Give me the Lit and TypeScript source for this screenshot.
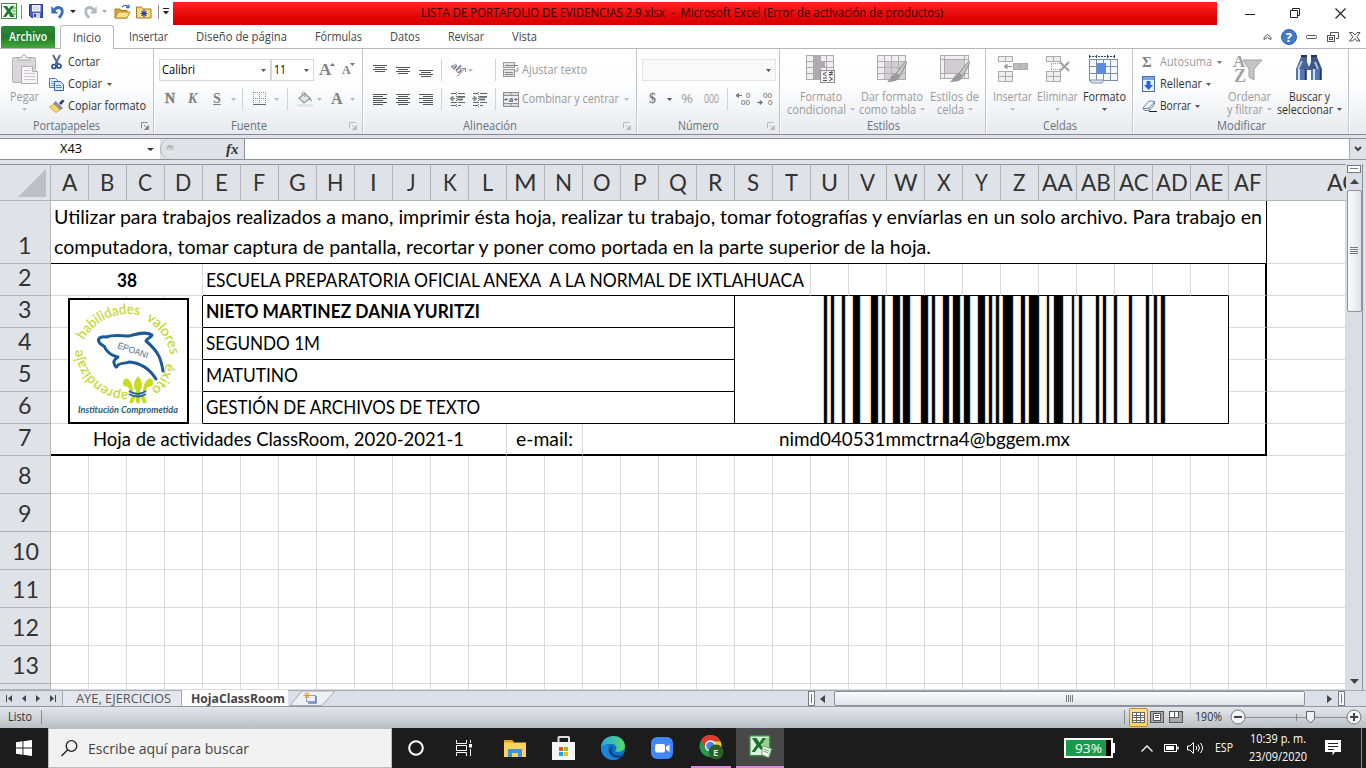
import { LitElement, html, css, svg, nothing } from "lit";
import { customElement, property } from "lit/decorators.js";

/** Text stretched horizontally to occupy a known width. */
@customElement("fit-text")
class FitText extends LitElement {
  @property({ type: Number }) w = 0;
  @property() text = "";
  static styles = css`
    :host { display: inline-block; flex: none; white-space: pre; }
    .t { display: inline-block; transform-origin: 0 50%; }
  `;
  render() {
    return html`<span class="t">${this.text}</span>`;
  }
  updated() {
    const t = this.renderRoot.querySelector(".t") as HTMLElement;
    t.style.transform = "none";
    this.style.width = "auto";
    const n = t.getBoundingClientRect().width;
    this.style.width = this.w + "px";
    if (n > 0 && this.w > 0) t.style.transform = `scaleX(${this.w / n})`;
  }
}

const T = (text: string, w: number, cls = "") => html`<fit-text class=${cls} .w=${w} .text=${text}></fit-text>`;
const B = (w: number, content: unknown = nothing, cls = "") =>
  html`<span class="box ${cls}" style="width:${w}px">${content}</span>`;
const I = (w: number, h: number, content: unknown) =>
  html`<svg width=${w} height=${h} viewBox="0 0 ${w} ${h}">${content}</svg>`;

const arrow = (c = "#555", w = 5) => I(w, 3, svg`<path d="M0 0H${w}L${w / 2} 3Z" fill=${c}/>`);
const lines = (rows: number[][], h: number) =>
  I(14, h, rows.map(([x, y, w]) => svg`<rect x=${x} y=${y} width=${w} height="1" fill="#555"/>`));
const launcher = (c: string) =>
  I(8, 8, svg`<path d="M.5 6.500V.5H6.500" fill="none" stroke=${c}/><path d="M3 3l3 3M7.500 3.500v4H3.500z" stroke=${c} fill=${c}/>`);

/* ---------- quick access icons ---------- */
const excelIcon = I(17, 17, svg`
  <rect x=".5" y=".5" width="15" height="15" fill="#f3faf3" stroke="#3f8f46"/>
  <path d="M11 2h3.500v12H11z" fill="#d3ead4"/><path d="M11 5h4M11 8h4M11 11h4" stroke="#69ab6c"/>
  <path d="M2 3h4l2 3 2-3h3l-3.500 5L13.500 14H9.500L7.500 10.500 5 14H2l4-6z" fill="#1d7a2b"/>`);
const saveIcon = I(15, 15, svg`
  <path d="M.5.500h13v13H2.500l-2-2z" fill="#4a5cc0" stroke="#28349a"/>
  <rect x="3" y="1" width="8.500" height="6.500" fill="#f6f8ff"/><path d="M4 3h6M4 5h6" stroke="#b9c3e6"/>
  <rect x="4" y="9" width="7" height="5" fill="#cfd5e6"/><rect x="5" y="10" width="2" height="3" fill="#333c80"/>`);
const undoIcon = (c: string, flip = false) => I(14, 14, svg`
  <g transform=${flip ? "translate(14 0) scale(-1 1)" : ""}>
    <path d="M3.500 5C5.500 1.500 11.300 1.500 11.300 6.500 11.300 9 9.500 11 8 12.800" fill="none" stroke=${c} stroke-width="2.800"/>
    <path d="M.3 1v7.500h7z" fill=${c}/></g>`);
const openIcon = I(17, 16, svg`
  <path d="M1 14V5h5l1 1.500h6V14z" fill="#e0a73a" stroke="#a87a20"/>
  <path d="M1 14l3.500-6H16l-3 6z" fill="#ffe28a" stroke="#b98a2a"/>
  <path d="M8 3c2-2.500 5-2 6.500 0M15 .5v3h-3" stroke="#3f72b8" stroke-width="1.300" fill="none"/>`);
const starFolder = I(16, 14, svg`
  <path d="M.5 13V2h5l1.500 2h8v9z" fill="#f8d878" stroke="#a87a20"/><rect x="4" y="5" width="8" height="7" fill="#fbe9ae"/>
  <path d="M8 4.500v8M4.500 8.500h7M5.500 6l5 5M10.500 6l-5 5" stroke="#27408f" stroke-width="1.100"/>`);

/* ---------- ribbon icons ---------- */
const pasteIcon = I(28, 32, svg`
  <rect x="1.500" y="3.500" width="23" height="25" rx="1.500" fill="#d9d7da" stroke="#b5b3b6"/>
  <path d="M7 6V3.500h3.500c0-3.500 5-3.500 5 0H19V6z" fill="#eee" stroke="#a9a8aa"/>
  <path d="M10.500 12.500h11l5 5v12h-16z" fill="#f7f5f8" stroke="#b2afb4"/><path d="M21.500 12.500v5h5" fill="#ddd" stroke="#b2afb4"/>
  <path d="M13 16.500h6M13 19.500h11M13 22.500h11M13 25.500h11" stroke="#c9c6cb"/>`);
const cutIcon = I(12, 15, svg`
  <path d="M2 0l5 9M9 0L4.500 9" stroke="#4d6793" stroke-width="1.800"/>
  <circle cx="3" cy="11.500" r="2" fill="none" stroke="#24509e" stroke-width="1.700"/><circle cx="8" cy="11" r="2" fill="none" stroke="#24509e" stroke-width="1.700"/>`);
const copyIcon = I(15, 13, svg`
  <path d="M.5.500h6l2 2v7h-8z" fill="#eaf2ff" stroke="#4f76b8"/><path d="M2 3.500h4M2 5.500h3M2 7.500h3" stroke="#7d9fd4"/>
  <path d="M5.500 3.500h6l3 3v6h-9z" fill="#dfebff" stroke="#315fae"/><path d="M7 7.500h5M7 9.500h6" stroke="#5a83c6"/>`);
const brushIcon = I(16, 14, svg`
  <path d="M10 4L13.500 .5l2 1.500-3.500 4z" fill="#333e60"/><path d="M6.500 2.500l7 6.500-3 2L4.500 5z" fill="#8b94aa" stroke="#5d667e" stroke-width=".7"/>
  <path d="M5 5l6 5.800L7 13.700 .3 8z" fill="#f7d866" stroke="#c79b35" stroke-width=".8"/>`);
const bordersIcon = I(14, 14, svg`
  <path d="M.5 0v13M6.500 0v13M12.500 0v13M0 .5h13M0 6.500h13" stroke="#888" stroke-dasharray="1 1"/><path d="M0 12.500h13" stroke="#666"/>`);
const bucketIcon = I(16, 15, svg`
  <path d="M2 6l6-4.500 5 5L7 11z" fill="#e4e4e4" stroke="#999" stroke-width="1.200"/><path d="M5 4V1q1.500-1.500 3 0V5" fill="none" stroke="#999"/>
  <path d="M11.500 4.500q3.500 1 3 5.500L12 7z" fill="#999"/><rect y="12" width="16" height="3" fill="#eae4ea"/>`);
const orientIcon = I(15, 14, svg`
  <text x="-1" y="7" font-size="11" font-weight="700" fill="#777" font-family="Liberation Serif" transform="rotate(42 4 6)">ab</text>
  <path d="M6 13.500L14 5.500M11 5.500h3.500v3.500" stroke="#888" fill="none"/>`);
const indentIcon = (right: boolean) => I(16, 15, svg`
  <path d="M1 1.500h5M8 1.500h7M8 4.500h7M8 7.500h5M1 10.500h5M8 10.500h7M1 13.500h5M8 13.500h3" stroke="#666"/>
  <path d="M7 5h8M7 7.500h6" stroke="#666" stroke-width="2" opacity=".7"/><path d="M6.500 0v15" stroke="#777" stroke-dasharray="1 1"/>
  <path d=${right ? "M0 6.500h3M2 4l3 2.500L2 9z" : "M1 6.500h4M3 4L0 6.500 3 9z"} stroke="#888" fill="#888"/>`);
const wrapIcon = I(16, 16, svg`
  <rect x=".5" y=".5" width="11" height="5" fill="#e5e2e6" stroke="#999"/><path d="M2 3.500h13" stroke="#888"/>
  <rect x=".5" y="7.500" width="11" height="7" fill="#e5e2e6" stroke="#999"/><path d="M2 10.500h8M2 12.500h8M15 5v4h-3" stroke="#888" fill="none"/>`);
const mergeIcon = I(16, 15, svg`
  <rect x=".5" y=".5" width="15" height="14" fill="#ddd" stroke="#8e8e8e"/><path d="M0 3.500h16M0 11.500h16M8 0v3M8 12v3" stroke="#8e8e8e"/>
  <rect x="1" y="4" width="14" height="7" fill="#f1eff2"/><path d="M1 7.500h4M11 7.500h4M3 6v3M13 6v3" stroke="#777"/>
  <text x="5.700" y="10.300" font-size="9" font-weight="700" fill="#666" font-family="Liberation Serif">a</text>`);
const grid = (x: number, y: number, w: number, h: number, c: number, r: number, fill = "#f1eef2", st = "#aeabaf") => svg`
  <rect x=${x + 0.5} y=${y + 0.5} width=${w} height=${h} fill=${fill} stroke=${st}/>
  ${Array.from({ length: c - 1 }, (_, i) => { const p = Math.round(x + ((i + 1) * w) / c) + 0.5; return svg`<path d="M${p} ${y}v${h}" stroke=${st}/>`; })}
  ${Array.from({ length: r - 1 }, (_, i) => { const p = Math.round(y + ((i + 1) * h) / r) + 0.5; return svg`<path d="M${x} ${p}h${w}" stroke=${st}/>`; })}`;
const brush = svg`<path d="M29 8c1-1 2 0 1.500 1.500L24 22l-4-2.500z" fill="#c8c6c9" stroke="#908e91"/><path d="M20 19l4 3.500C22 27.500 16 28 11 28c3-2 4-7.500 9-9z" fill="#9a989b"/>`;
const condIcon = I(32, 30, svg`${grid(1, 1, 27, 24, 4, 4)}<path d="M8 2h7v5h5v6h-5v12H8z" fill="#adabae"/>
  <rect x="15.500" y="16.500" width="14" height="12" fill="#f3f3f3" stroke="#8e8e8e"/><path d="M21.500 18l-3.500 2 3.500 2M18 24h4M18 26.500h4M24 18.500h4M24 20.500h4M27 17l-2 5M24 23l3.500 2-3.500 2" stroke="#555" fill="none"/>`);
const tableIcon = I(32, 30, svg`${grid(1, 1, 28, 24, 4, 4)}<path d="M8 7h21v18H8z" fill="#bbb9bc" opacity=".6"/>${brush}`);
const styleIcon = I(32, 30, svg`${grid(1, 1, 28, 23, 1, 1)}<rect x="6" y="6" width="19" height="13" fill="#cfcdd0"/><path d="M5.500 1v23M25.500 1v23M1 5.500h28M1 19.500h28" stroke="#aeabaf"/>${brush}`);
const insertIcon = I(32, 30, svg`${grid(1, 2, 14, 5, 2, 1)}${grid(1, 17, 14, 10, 2, 2)}${grid(16, 9, 14, 6, 2, 1, "#bbb")}
  <path d="M8 12.500h7M10 10l-3 2.500 3 2.500z" stroke="#999" fill="#999"/>`);
const deleteIcon = I(32, 30, svg`${grid(4, 2, 14, 5, 2, 1)}${grid(4, 17, 14, 10, 2, 2)}
  <path d="M9 9.500h12M9 15.500h12M9.500 10v6" stroke="#999" stroke-dasharray="1 1" fill="none"/><path d="M18 8l9 9M27 8l-9 9" stroke="#a5a3a6" stroke-width="2.200"/>`);
const formatIcon = I(32, 30, svg`
  <path d="M1 2.500h25" stroke="#24436e" stroke-dasharray="2 1"/><path d="M1.500 1v3M8.500 1v3M19.500 1v3M26.500 1v3" stroke="#24436e"/>
  ${grid(1, 5, 28, 21, 4, 3, "#f5f8fd", "#7f90ab")}<rect x="9" y="9" width="9" height="11" fill="#5c8be6"/>
  <path d="M2 26q0 3 3 3h9l2-3z" fill="#dfe5f0" stroke="#7f90ab"/>`);
const fillIcon = I(13, 16, svg`<rect x=".5" y=".5" width="12" height="15" fill="#e9f1fe" stroke="#4a6ea8"/><rect x="1" y="1" width="11" height="3" fill="#7ea2dd"/>
  <path d="M4.500 5h4v4H11l-4.500 5L2 9h2.500z" fill="#2664d8"/>`);
const eraseIcon = I(15, 12, svg`<path d="M1 8L6.500 1.500Q9 .5 12.500 1.500V4L7.500 10.500H3Q1 10 1 8z" fill="#f3f6fb" stroke="#6d83ae"/><path d="M1 8q3 1.500 6 0l5.500-6M7 8v2.500" fill="none" stroke="#6d83ae"/><path d="M7 11.500h8" stroke="#222"/>`);
const sortIcon = I(32, 30, svg`
  <text x="0" y="13" font-size="17" font-weight="700" fill="#a3a1a4" font-family="Liberation Serif">A</text>
  <text x="1" y="28" font-size="18" font-weight="700" fill="#a3a1a4" font-family="Liberation Serif">Z</text>
  <path d="M10 6h19l-8 9v11l-5-3v-8z" fill="#c6c4c7" stroke="#a3a1a4"/>`);
const findIcon = I(28, 27, svg`
  <path d="M6 3h6v5l2 5v3h-2v10H1v-11z" fill="#4a6595"/><path d="M16 3h6l5 12v11H16v-10h-2v-3l2-5z" fill="#3c5786"/>
  <path d="M3 15l4-8M20 8l3 7" stroke="#aebfdd" stroke-width="2"/><rect x="1" y="15" width="11" height="11" rx="1" fill="#5577b0"/><rect x="16" y="15" width="11" height="11" rx="1" fill="#5577b0"/>
  <path d="M4 15v11M19 15v11" stroke="#d4deef" stroke-width="2"/><path d="M10.500 15v11M25.500 15v11" stroke="#203a69" stroke-width="1.500"/><path d="M6 2h6M16 2h6" stroke="#23365a" stroke-width="2"/>`);

/* ---------- barcode: [start, end] of each bar in thirds of a pixel ---------- */
const bars = [[72, 81], [94, 103], [126, 135], [158, 179], [212, 233], [246, 254], [278, 299], [310, 329], [363, 383], [395, 404], [428, 448], [459, 480], [491, 511], [534, 556], [566, 575], [588, 597], [610, 640], [664, 674], [686, 716], [740, 748], [761, 790], [815, 823], [836, 845], [889, 898], [910, 919], [942, 952], [986, 995], [1039, 1048], [1061, 1070], [1083, 1094]];
const barcode = I(493, 127, bars.map(([a, b]) => {
  const x = Math.round(a / 3) + 65, e = Math.round(b / 3) + 65;
  return svg`<rect x=${x - 1} width="1" height="127" fill="#ffc68a"/><rect x=${x} width=${e - x} height="127"/><rect x=${x} width="1" height="127" fill="#2a0c00"/><rect x=${e - 1} width="1" height="127" fill="#00386e" opacity=".6"/><rect x=${e} width="1" height="127" fill="#9fd2fb"/>`;
}));

const logo = html`<svg class="logo" width="121" height="126" viewBox="0 0 121 126">
  <rect x="1" y="1" width="119" height="124" fill="#fff" stroke="#000" stroke-width="2"/>
  <defs>
    <path id="p1" d="M16 42A50 50 0 0 1 74 18"/><path id="p2" d="M78 22A50 50 0 0 1 103 60"/>
    <path id="p3" d="M98 65A48 48 0 0 1 76 97"/><path id="p4" d="M60 94A46 46 0 0 1 14 46"/>
  </defs>
  <g fill="#c5d62b" font-family="Lato" font-size="14" stroke="#c5d62b" stroke-width=".2">
    <text textLength="65" lengthAdjust="spacingAndGlyphs"><textPath href="#p1">habilidades</textPath></text>
    <text textLength="44" lengthAdjust="spacingAndGlyphs"><textPath href="#p2">valores</textPath></text>
    <text textLength="31" lengthAdjust="spacingAndGlyphs"><textPath href="#p3">éxito</textPath></text>
    <text textLength="69" lengthAdjust="spacingAndGlyphs"><textPath href="#p4">aprendizaje</textPath></text>
  </g>
  <path d="M95 73C93 61 91 54 78 43 79 40 83 40 84 37 78 33 68 36 61 38 54 38 46 36 38 39 34 38 29 40 31 44 33 48 37 47 37 50 40 55 44 58 50 59 48 61 45 62 46 65 47 69 49 70 49 68 52 64 58 66 61 64 74 65 83 73 88 81" fill="none" stroke="#1b5a94" stroke-width="3" stroke-linejoin="round" stroke-linecap="round"/>
  <text x="49" y="50" font-family="Liberation Sans" font-size="9" fill="#4a6f92" textLength="32" lengthAdjust="spacingAndGlyphs" transform="rotate(19 49 50)">EPOANI</text>
  <g fill="#c8dc1e"><path d="M70 78q-7 8-2 15v11q2 3 4 0V93q5-7-2-15z"/><path d="M65 94Q65 83 58 80q-5 4-2 8 6 0 6 6zM75 94q0-11 7-14 5 4 2 8-6 0-6 6z"/><path d="M64 97l-3 8h4l3-7zM76 97l3 8h-4l-3-7z"/></g>
  <path d="M61 93q9 6 17 0M61 96q9 5 17 0" stroke="#24639b" stroke-width="1.800" fill="none"/>
  <text x="10" y="115" font-family="Lato" font-style="italic" font-weight="700" font-size="8.500" fill="#2b5a75" textLength="100" lengthAdjust="spacingAndGlyphs">Institución Comprometida</text>
</svg>`;

const cols = [..."ABCDEFGHIJKLMNOPQRSTUVWXYZ", "AA", "AB", "AC", "AD", "AE", "AF"];
/** Advance widths of the capital letters, in thousandths of an em. */
const adv: Record<string, number> = { A: 579, B: 544, C: 533, D: 615, E: 488, F: 459, G: 631, H: 623, I: 252, J: 319, K: 520, L: 420, M: 855, N: 646, O: 662, P: 517, Q: 673, R: 543, S: 459, T: 487, U: 642, V: 567, W: 890, X: 519, Y: 487, Z: 468 };
const head = (s: string) => T(s, [...s].reduce((n, ch) => n + adv[ch] * 0.0265, 0));

@customElement("app-root")
class AppRoot extends LitElement {
  static styles = css`
    :host { display: block; width: 1366px; height: 768px; overflow: hidden; font: 12px/16px "Open Sans", "Noto Sans", sans-serif; color: #333; background: #fff; }
    * { box-sizing: border-box; }
    svg { display: block; flex: none; overflow: visible; }
    .app { display: flex; flex-direction: column; height: 768px; }
    .row { display: flex; align-items: center; }
    .box { display: flex; align-items: center; flex: none; height: 100%; }
    .c { justify-content: center; }
    .vline { width: 1px; height: 14px; background: #8a8a8a; }
    .fade { width: 1px; height: 22px; background: #d0d2d6; }

    .title { height: 25px; flex: none; padding-bottom: 2px; }
    .red { height: 23px; margin-top: 3px; width: 1044px; flex: none; background: linear-gradient(#fb2520, #e00404 70%, #d80000); display: flex; align-items: center; padding-left: 248px; color: #300; margin-right: 28px; }
    .tabs { height: 24px; flex: none; align-items: stretch; border-bottom: 1px solid #b3b7bd; }
    .tabs > .box { height: 24px; color: #444; }
    .file { background: linear-gradient(#2c8a33, #1f7a2a 50%, #46a83a); border-radius: 2px 2px 0 0; font-weight: 600; margin: 1px 5px 0 1px; padding-left: 8px; }
    .tabs > .file { color: #fff; height: 22px; }
    .tabs > .sel { background: #fff; border: 1px solid #b3b7bd; border-bottom: 0; border-radius: 3px 3px 0 0; height: 24px; padding-left: 12px; }

    .ribbon { height: 86px; flex: none; display: flex; background: linear-gradient(#fff, #fdfdfe 45%, #e7eaee); border-bottom: 1px solid #85898f; }
    .grp { flex: none; display: flex; flex-direction: column; border-right: 1px solid #c3c7cd; box-shadow: 1px 0 0 #fff; }
    .body { height: 69px; display: flex; }
    .label { height: 16px; color: #66707e; }
    .stack { display: flex; flex-direction: column; }
    .stack.three { padding-top: 2px; }
    .stack.two { padding-top: 10px; gap: 7px; }
    .r { display: flex; align-items: center; height: 22px; flex: none; }
    .dim { color: #9a9a9a; }
    .combo { height: 22px; border: 1px solid #d5d7dc; background: #fff; color: #000; display: flex; align-items: center; flex: none; }
    .combo.off { background: #f9f9fa; border-color: #e2e3e8; }
    .big { display: flex; flex-direction: column; align-items: center; flex: none; line-height: 13px; color: #333; }
    .big.dim { color: #9a9a9a; }
    .ico { height: 41px; padding-top: 5px; }
    .ln { display: flex; align-items: center; gap: 4px; height: 13px; }
    .serif { font-family: "Liberation Serif", serif; font-weight: 700; color: #808080; line-height: 18px; }

    .fbar { height: 29px; flex: none; background: #e0e3ea; padding: 3px 0 4px; }
    .fin { height: 22px; border: 1px solid #8d9299; border-left: 0; border-right: 0; background: #dfe2e7; display: flex; align-items: center; }
    .name { width: 160px; height: 20px; background: #fff; color: #000; display: flex; align-items: center; padding-left: 60px; }
    .pill { width: 84px; height: 20px; background: #dfe2e7; border: 1px solid #a9adb3; border-width: 0 0 0 1px; border-radius: 10px 0 0 10px; display: flex; align-items: center; padding-left: 5px; flex: none; }
    .dot { width: 8px; height: 8px; border-radius: 50%; background: linear-gradient(#aaa, #f4f4f4); margin-right: 52px; }
    .finput { width: 1105px; height: 20px; background: #fff; border-left: 1px solid #8d9299; flex: none; }
    .fx { font: italic 700 15px/16px "Liberation Serif", serif; color: #333; }
    .expand { flex: 1; height: 20px; display: flex; align-items: center; justify-content: center; border-left: 1px solid #a9adb3; }

    .work { height: 526px; flex: none; display: flex; background: #dce0e8; }
    .sheet { width: 1346px; height: 526px; overflow: hidden; display: grid; grid-template-columns: 51px repeat(32, 38px) 79px; grid-template-rows: 37px 63px repeat(6, 32px) repeat(6, 38px) 6px; background: #fff; flex: none; font-family: Lato, sans-serif; }
    .h { background: #dfe2e7; border-right: 1px solid #b1b5ba; border-bottom: 1px solid #b1b5ba; border-top: 1px solid #8f949b; display: flex; align-items: center; justify-content: center; font-size: 24px; line-height: 34px; color: #333; white-space: nowrap; padding-bottom: 1px; }
    .ag { justify-content: flex-start; padding-left: 60px; border-right: 0; }
    .rh { border-top: 0; align-items: flex-end; line-height: 30px; padding-bottom: 3px; }
    .tall { padding-bottom: 3px; }
    .corner { align-items: flex-end; justify-content: flex-end; padding: 0 4px 3px 0; }
    .cell { border-right: 1px solid #d9dade; border-bottom: 1px solid #d9dade; }
    .m { background: #fff; color: #000; font-size: 18.500px; line-height: 30px; display: flex; align-items: center; padding: 0 0 1px 3px; border-right: 1px solid #d9dade; border-bottom: 1px solid #d9dade; white-space: nowrap; }
    .m1 { flex-direction: column; align-items: flex-start; justify-content: flex-start; padding-top: 2px; line-height: 29px; gap: 1px; border-color: #000; }
    .b { font-weight: 700; }
    .blk { border-color: #000; }
    .low { padding-bottom: 0; }
    .edge { border-right: 2px solid #000; }
    .nr { border-right-color: #000; }
    .nb { border-bottom-color: #000; }
    .thick { border-bottom: 2px solid #000; }
    .bar { padding: 0; }
    .mid { justify-content: center; padding-left: 0; padding-right: 0; }
    .logo { grid-column: 2 / 6; grid-row: 4 / 8; margin: 2px 0 0 17px; z-index: 2; }

    .vs { width: 16px; display: flex; flex-direction: column; align-items: center; height: 526px; background: #d9dde4; flex: none; }
    .split { width: 14px; height: 8px; border: 1px solid #777c84; background: #fff; padding: 2px 2px; flex: none; margin-top: 1px; }
    .split i { display: block; height: 1px; background: #777; }
    .vthumb { width: 15px; height: 122px; border: 1px solid #8c929c; border-radius: 2px; background: linear-gradient(90deg, #fafbfc, #dfe3e9); display: flex; align-items: center; justify-content: center; flex: none; }
    .ua { height: 17px; display: flex; align-items: center; }
    .da { margin-top: auto; height: 16px; display: flex; align-items: center; padding-bottom: 2px; }
    .rim { width: 1px; height: 543px; background: #8c929c; flex: none; }

    .sheets { height: 17px; flex: none; background: #dbdfe7; border-top: 1px solid #a5aab3; border-bottom: 1px solid #9297a0; }
    .st1 { height: 15px; border-left: 1px solid #a5aab3; border-right: 1px solid #a5aab3; background: #e4e7ed; color: #555; padding-left: 13px; }
    .st2 { height: 16px; margin-top: -1px; background: #fff; color: #444; font-weight: 700; padding: 2px 0 0 9px; }
    .spl { width: 7px; height: 15px; border: 1px solid #777c84; background: #fff; padding: 2px; flex: none; }
    .spl i { display: block; width: 1px; height: 9px; background: #777; }
    .hthumb { width: 471px; height: 15px; border: 1px solid #8c929c; border-radius: 2px; background: linear-gradient(#fafbfc, #dfe3e9); display: flex; align-items: center; justify-content: center; flex: none; }

    .status { height: 21px; flex: none; background: linear-gradient(#e2e5e9, #d0d4d9 50%, #b9bec3); color: #333; padding-bottom: 1px; }
    .view { width: 19px; height: 19px; border: 1px solid #c28a2b; border-radius: 2px; background: linear-gradient(#fbe199, #fdd45e); display: flex; align-items: center; justify-content: center; flex: none; margin-right: 2px; }

    .task { height: 40px; flex: none; background: #1c1c1c; color: #fff; }
    .search { width: 344px; height: 40px; background: #f2f2f2; border: 1px solid #bdbdbd; display: flex; align-items: center; color: #444; padding-left: 12px; flex: none; font-size: 15px; }
    .run { border-bottom: 2px solid #e283dc; padding-bottom: 1px; }
    .act { background: #484848; }
    .batt { width: 49px; height: 20px; border: 2px solid #fff; background: linear-gradient(90deg, #169b4a 40px, #000 40px); display: flex; align-items: center; padding-left: 9px; font-size: 13.500px; flex: none; }
    .nub { width: 2px; height: 10px; background: #fff; flex: none; }
    .clock { display: flex; flex-direction: column; line-height: 18px; width: 76px; align-items: flex-start; flex: none; }
    .clock .p { margin-left: 1px; }
  `;

  private label(pad: number, text: string, tw: number, launch = 0, dark = false) {
    return html`<div class="row label">${B(pad)}${T(text, tw)}${launch ? html`${B(launch - pad - tw)}${launcher(dark ? "#888" : "#bbb")}` : nothing}</div>`;
  }
  private big(w: number, icon: unknown, l1: [string, number], l2: [string, number] | null, dim = true) {
    const a = arrow(dim ? "#bbb" : "#555");
    return html`<div class="big ${dim ? "dim" : ""}" style="width:${w}px"><div class="ico">${icon}</div>
      <div class="ln">${T(l1[0], l1[1])}</div><div class="ln">${l2 ? T(l2[0], l2[1]) : nothing}${a}</div></div>`;
  }

  private sheet() {
    const out: unknown[] = [];
    const at = (r: number, c: number, span: number, cls: string, content: unknown = nothing) =>
      out.push(html`<div class=${cls} style="grid-area:${r}/${c}/span 1/span ${span}">${content}</div>`);
    at(1, 1, 1, "h corner", I(28, 28, svg`<path d="M28 0V28H0Z" fill="#bcc0c5"/>`));
    cols.forEach((c, i) => at(1, i + 2, 1, "h", head(c)));
    at(1, 34, 1, "h ag", head("AG"));
    for (let r = 1; r <= 14; r++) at(r + 1, 1, 1, "h rh", r < 14 ? T(String(r), r > 9 ? 27 : 13.5) : nothing);

    at(2, 2, 32, "m m1", html`${T("Utilizar para trabajos realizados a mano, imprimir ésta hoja, realizar tu trabajo, tomar fotografías y envíarlas en un solo archivo. Para trabajo en", 1208)}${T("computadora, tomar captura de pantalla, recortar y poner como portada en la parte superior de la hoja.", 877)}`);
    at(3, 2, 4, "m mid b low", T("38", 20));
    at(3, 6, 16, "m low nb", T("ESCUELA PREPARATORIA OFICIAL ANEXA  A LA NORMAL DE IXTLAHUACA", 598));
    for (let c = 22; c <= 33; c++) at(3, c, 1, "cell" + (c === 33 ? " edge" : " nb"));
    const fields: [string, number, string][] = [
      ["NIETO MARTINEZ DANIA YURITZI", 274, " b"], ["SEGUNDO 1M", 114, ""], ["MATUTINO", 92, ""], ["GESTIÓN DE ARCHIVOS DE TEXTO", 274, ""],
    ];
    fields.forEach(([t, w, b], i) => {
      for (let c = 2; c <= 5; c++) at(4 + i, c, 1, "cell" + (c === 5 ? " nr" : ""));
      at(4 + i, 6, 14, "m blk" + b, T(t, w));
      at(4 + i, 33, 1, "cell edge");
    });
    out.push(html`<div class="m blk bar" style="grid-area:4/20/span 4/span 13">${barcode}</div>`);
    at(8, 2, 12, "m mid thick", T("Hoja de actividades ClassRoom, 2020-2021-1", 371));
    at(8, 14, 2, "m mid thick", T("e-mail:", 57));
    at(8, 16, 18, "m mid thick edge", T("nimd040531mmctrna4@bggem.mx", 291));
    for (let r = 9; r <= 15; r++) for (let c = 2; c <= 33; c++) at(r, c, 1, "cell");
    for (let r = 2; r <= 15; r++) at(r, 34, 1, "cell");
    out.push(logo);
    return out;
  }

  render() {
    return html`<div class="app">
      <div class="row title">
        ${B(1)}${B(20, excelIcon)}${B(8, html`<i class="vline"></i>`)}${B(22, saveIcon)}${B(19, undoIcon("#3b6cb8"))}${B(13, arrow("#222", 6))}
        ${B(19, undoIcon("#b5b8bd", true))}${B(12, arrow("#aaa"))}${B(22, openIcon)}${B(22, starFolder)}${B(5, html`<i class="vline"></i>`)}
        ${B(10, I(6, 7, svg`<path d="M0 .5h6" stroke="#222"/><path d="M0 3h6L3 6.500z" fill="#222"/>`))}
        <div class="red">${T("LISTA DE PORTAFOLIO DE EVIDENCIAS 2.9.xlsx  -  Microsoft Excel (Error de activación de productos)", 522)}</div>
        ${B(45, I(10, 12, svg`<path d="M0 8.500h10" stroke="#222"/>`))}
        ${B(45, I(10, 12, svg`<path d="M.5 4.500h7v7h-7zM2.500 4.500v-2h7v7h-2" fill="none" stroke="#222"/>`))}
        ${B(12, I(11, 12, svg`<path d="M.5 2.500l10 10M10.500 2.500l-10 10" stroke="#222" stroke-width="1.200"/>`))}
      </div>
      <div class="row tabs">
        ${B(54, T("Archivo", 38), "file")}${B(54, T("Inicio", 28), "sel")}${B(15)}
        ${B(67, T("Insertar", 39))}${B(119, T("Diseño de página", 91))}${B(75, T("Fórmulas", 47))}${B(58, T("Datos", 30))}${B(64, T("Revisar", 36))}${B(751, T("Vista", 25))}
        ${B(18, I(9, 8, svg`<path d="M1 4.500L4.500 1.500 8 4.500v2L4.500 4.500 1 6.500z" fill="none" stroke="#555"/>`))}
        ${B(25, I(16, 16, svg`<circle cx="8" cy="8" r="7.500" fill="#3f7bd0" stroke="#2c5da8"/><text x="4.700" y="12.500" font-size="13" font-weight="700" fill="#fff">?</text>`))}
        ${B(21, I(11, 6, svg`<rect x=".5" y="1.500" width="10" height="3" rx="1" fill="#fff" stroke="#555"/>`))}
        ${B(22, I(13, 11, svg`<path d="M3.500 3V.5h8v6H9" fill="none" stroke="#555"/><rect x=".5" y="3.500" width="7" height="6" fill="#fff" stroke="#555"/><rect x="2.500" y="5.500" width="3" height="2" fill="none" stroke="#555"/>`))}
        ${B(12, I(12, 10, svg`<path d="M.5.500h3L6 3l2-2.500h3L8 4.800l3 4.200H8L6 6.500 3.500 9h-3L4 4.800z" fill="#fff" stroke="#555"/>`))}
      </div>
      <div class="ribbon">
        <div class="grp" style="width:154px"><div class="body">
          ${this.big(49, pasteIcon, ["Pegar", 29], null)}
          <div class="stack three">
            <div class="r">${B(2)}${B(17, cutIcon)}${T("Cortar", 32)}</div>
            <div class="r">${B(19, copyIcon)}${B(39, T("Copiar", 34))}${arrow()}</div>
            <div class="r">${B(19, brushIcon)}${T("Copiar formato", 78)}</div>
          </div></div>${this.label(33, "Portapapeles", 67, 141, true)}</div>
        <div class="grp" style="width:209px"><div class="body"><div class="stack two">
          <div class="r">${B(5)}<div class="combo" style="width:112px">${B(2)}${B(99, T("Calibri", 33))}${arrow()}</div><div class="combo" style="width:43px">${B(2)}${B(30, T("11", 12))}${arrow()}</div>
            ${B(5)}${B(23, html`<span class="serif" style="font-size:17px">A</span>${I(4, 14, svg`<path d="M-1 3h5L1.500 0z" fill="#777"/>`)}`)}${B(18, html`<span class="serif" style="font-size:12px">A</span>${I(4, 14, svg`<path d="M-1 0h5L1.500 3z" fill="#777"/>`)}`)}</div>
          <div class="r serif" style="font-size:14px">${B(11)}${B(23, html`<span style="-webkit-text-stroke:.4px #808080">N</span>`)}${B(25, html`<i>K</i>`)}${B(18, html`<u>S</u>`)}${B(11, arrow("#bbb"))}${B(11, html`<i class="fade"></i>`)}${B(21, bordersIcon)}${B(13, arrow("#bbb"))}${B(10, html`<i class="fade"></i>`)}
            ${B(20, bucketIcon)}${B(14, arrow("#bbb"))}${B(19, html`<span style="font-size:16px">A</span>`)}${arrow("#bbb")}</div>
        </div></div>${this.label(77, "Fuente", 36, 195)}</div>
        <div class="grp" style="width:274px"><div class="body"><div class="stack two">
          <div class="r">${B(10)}${B(23, lines([[0, 0, 14], [2, 2, 10], [0, 4, 14], [2, 6, 10]], 10))}${B(23, lines([[0, 1, 14], [2, 3, 10], [0, 5, 14], [2, 7, 10]], 8))}${B(22, lines([[0, 4, 14], [2, 6, 10], [0, 8, 14], [2, 10, 10]], 8))}${B(10, html`<i class="fade"></i>`)}${B(17, orientIcon)}${B(27, arrow("#bbb"))}
            ${B(8, html`<i class="fade"></i>`)}${B(19, wrapIcon)}${T("Ajustar texto", 65, "dim")}</div>
          <div class="r">${B(10)}${[0, 1, 2].map((k) => B(k === 2 ? 22 : 23, lines([14, 10, 14, 10, 14, 10].map((w, i) => [k === 0 ? 0 : k === 1 ? (14 - w) / 2 : 14 - w, i * 2, w]), 11)))}${B(9, html`<i class="fade"></i>`)}${B(22, indentIcon(false))}${B(23, indentIcon(true))}
            ${B(8, html`<i class="fade"></i>`)}${B(19, mergeIcon)}${B(102, T("Combinar y centrar", 97, "dim"))}${arrow("#bbb")}</div>
        </div></div>${this.label(100, "Alineación", 54, 260)}</div>
        <div class="grp" style="width:143px"><div class="body"><div class="stack two">
          <div class="r">${B(5)}<div class="combo off" style="width:134px">${B(123)}${arrow()}</div></div>
          <div class="r">${B(12)}${B(18, html`<span class="serif" style="font-size:14px">$</span>`)}${B(14, arrow())}${B(23, T("%", 12, "dim"))}${B(23, T("000", 15, "dim"))}${B(8, html`<i class="fade"></i>`)}
            ${[0, 1].map((k) => B(22, I(16, 15, svg`<g font-family="Liberation Sans" font-size="8" fill="#666"><text x=${k ? 6 : 11} y="6">${k ? "00" : "0"}</text><text x=${k ? 11 : 6} y="13">${k ? "0" : "00"}</text></g><path d=${k ? "M0 10.500h5M3 8.500l2.500 2-2.500 2z" : "M1 3.500h6M3.500 1.500L1 3.500l2.500 2z"} stroke="#777" fill="#777"/>`)))}</div>
        </div></div>${this.label(41, "Número", 41, 130)}</div>
        <div class="grp" style="width:206px"><div class="body">${B(2)}
          ${this.big(77, condIcon, ["Formato", 42], ["condicional", 59])}${this.big(65, tableIcon, ["Dar formato", 62], ["como tabla", 57])}${this.big(61, styleIcon, ["Estilos de", 49], ["celda", 27])}
        </div>${this.label(87, "Estilos", 33)}</div>
        <div class="grp" style="width:147px"><div class="body">${B(5)}
          ${this.big(43, insertIcon, ["Insertar", 39], null)}${this.big(47, deleteIcon, ["Eliminar", 41], null)}${this.big(46, formatIcon, ["Formato", 43], null, false)}
        </div>${this.label(57, "Celdas", 34)}</div>
        <div class="grp" style="width:216px"><div class="body">
          <div class="stack three" style="width:89px">
            <div class="r">${B(9)}${B(18, html`<span class="serif" style="font-size:15px">Σ</span>`)}${B(57, T("Autosuma", 52, "dim"))}${arrow("#777")}</div>
            <div class="r">${B(9)}${B(18, fillIcon)}${B(46, T("Rellenar", 42))}${arrow()}</div>
            <div class="r">${B(9)}${B(18, eraseIcon)}${B(35, T("Borrar", 31))}${arrow()}</div>
          </div>
          ${this.big(54, sortIcon, ["Ordenar", 43], ["y filtrar", 36])}${this.big(66, findIcon, ["Buscar y", 41], ["seleccionar", 56], false)}
        </div>${this.label(84, "Modificar", 49)}</div>
      </div>
      <div class="fbar"><div class="fin">
        <div class="name">${B(87, T("X43", 22))}${arrow("#333", 7)}</div>
        <div class="pill"><i class="dot"></i><span class="fx">fx</span></div><div class="finput"></div>
        <div class="expand">${I(8, 6, svg`<path d="M1 1l3 3 3-3" fill="none" stroke="#444" stroke-width="2"/>`)}</div>
      </div></div>
      <div class="work">
        <div class="sheet">${this.sheet()}</div>
        <div class="vs"><div class="split"><i></i></div><div class="ua">${I(9, 5, svg`<path d="M0 5h9L4.500 0z" fill="#444"/>`)}</div><div class="vthumb">${I(8, 8, svg`<path d="M0 .5h8M0 2.500h8M0 4.500h8M0 6.500h8" stroke="#777"/>`)}</div>
          <div class="da">${I(9, 5, svg`<path d="M0 0h9L4.500 5z" fill="#444"/>`)}</div></div>
        <i class="rim"></i>
      </div>
      <div class="row sheets">
        ${B(6)}${B(16, I(6, 7, svg`<path d="M.5 0v7" stroke="#444"/><path d="M6 0v7L2 3.500z" fill="#444"/>`))}${B(14, I(4, 7, svg`<path d="M4 0v7L0 3.500z" fill="#444"/>`))}${B(14, I(4, 7, svg`<path d="M0 0v7l4-3.500z" fill="#444"/>`))}${B(12, I(6, 7, svg`<path d="M5.500 0v7" stroke="#444"/><path d="M0 0v7l4-3.500z" fill="#444"/>`))}
        ${B(120, T("AYE, EJERCICIOS", 95), "st1")}${B(106, T("HojaClassRoom", 94), "st2")}
        ${B(520, I(48, 15, svg`<path d="M2 14.500L14 0H47L34 14.500z" fill="#eef0f4" stroke="#a5aab3"/><rect x="18.500" y="4.500" width="9" height="6" fill="#eaf1fd" stroke="#8aa0c8"/><path d="M20 12h8V5" stroke="#6680b0" stroke-width="1.500" fill="none"/><path d="M19 1v7M15.500 4.500h7M16.500 2l5 5M21.500 2l-5 5" stroke="#e29a25"/>`))}
        <span class="spl"><i></i></span>${B(5)}${B(14, I(5, 8, svg`<path d="M5 0v8L0 4z" fill="#444"/>`))}
        <div class="hthumb">${I(8, 7, svg`<path d="M.5 0v7M2.500 0v7M4.500 0v7M6.500 0v7" stroke="#777"/>`)}</div>
        ${B(22)}${B(11, I(5, 8, svg`<path d="M0 0v8l5-4z" fill="#444"/>`))}<span class="spl"><i></i></span>
      </div>
      <div class="row status">
        ${B(8)}${B(33, T("Listo", 24))}${B(1083, html`<i class="vline"></i>`)}${B(5, html`<i class="vline"></i>`)}
        <span class="view">${I(13, 11, grid(0, 0, 12, 10, 3, 4, "#fff", "#666"))}</span>
        ${B(19, I(14, 12, svg`<rect x=".5" y=".5" width="13" height="11" fill="#aaa" stroke="#555"/><rect x="3.500" y="2.500" width="7" height="7" fill="#fff" stroke="#555"/><path d="M5 4.500h4M5 6.500h4" stroke="#555"/>`))}
        ${B(26, I(14, 12, svg`<rect x=".5" y=".5" width="13" height="11" fill="#aaa" stroke="#555"/><path d="M1 1h4v5H1zM6 1h4v5H6z" fill="#fff"/><path d="M5.500 1v5.500H1M9.500 1v5.500H6" fill="none" stroke="#555"/>`))}
        ${B(35, T("190%", 27))}
        ${I(132, 16, svg`<path d="M14 8.500h105" stroke="#8b929d"/><path d="M66.500 5v7" stroke="#888"/><circle cx="8" cy="8" r="7" fill="#f2f3f5" stroke="#777"/><path d="M4 8h8" stroke="#444" stroke-width="2"/><path d="M76.500 2.500h8V10l-4 4-4-4z" fill="#f2f3f5" stroke="#666"/><circle cx="124" cy="8" r="7" fill="#f2f3f5" stroke="#777"/><path d="M120 8h8M124 4v8" stroke="#444" stroke-width="2"/>`)}
      </div>
      <div class="row task">
        ${B(48, I(16, 16, svg`<path d="M0 2.200L6.500 1.300V7.600H0zM7.400 1.200L16 0V7.600H7.400zM0 8.400H6.500V14.700L0 13.800zM7.400 8.400H16V16L7.400 14.800z" fill="#fff"/>`), "c")}
        <div class="search">${B(27, I(17, 17, svg`<circle cx="10.500" cy="6" r="5.300" fill="none" stroke="#222" stroke-width="1.300"/><path d="M6.500 10L.5 16" stroke="#222" stroke-width="1.500"/>`))}${T("Escribe aquí para buscar", 161)}</div>
        ${B(48, I(16, 16, svg`<circle cx="8" cy="8" r="6.800" fill="none" stroke="#fff" stroke-width="2"/>`), "c")}
        ${B(48, I(16, 16, svg`<path d="M.5 0v3.500h10V0M.5 16v-3.500h10V16M.5 5.500h10v5H.5zM14.500 0v3M14.500 9v7" fill="none" stroke="#fff"/><rect x="13" y="4" width="3" height="3.500" fill="#fff"/>`), "c")}
        ${B(53, I(22, 19, svg`<path d="M0 1h8l2 2.500h12V18H0z" fill="#ffd25e"/><path d="M0 1h8l2 2.500H0z" fill="#e0a21b"/><path d="M4 18v-8h14v8h-4v-4H8v4z" fill="#3d96d8"/>`), "c")}
        ${B(44, I(23, 24, svg`<path d="M6.500 7V1.500Q6.500 1 7 1h9.500q.5 0 .5.500V7" fill="none" stroke="#ddd" stroke-width="2"/><rect y="6" width="23" height="18" fill="#f5f5f5"/><path d="M7 11h4v4H7z" fill="#f1511b"/><path d="M12 11h4v4h-4z" fill="#80cc28"/><path d="M7 16h4v4H7z" fill="#00adef"/><path d="M12 16h4v4h-4z" fill="#fbbc09"/>`), "c")}
        ${B(55, I(24, 24, svg`<defs><linearGradient id="eg"><stop offset="0" stop-color="#2aa7e0"/><stop offset="1" stop-color="#56d96a"/></linearGradient></defs><circle cx="12" cy="12" r="12" fill="#0e6fc4"/><path d="M0 11C1-3 23-4 24 10c0 6-8 7-10 5 3-2 1-7-3-7C5 8 1 9 0 13z" fill="url(#eg)"/><path d="M8 10c-3 6 2 14 11 12-9 5-19-1-19-10 2-3 5-4 8-2z" fill="#1a86dd"/><path d="M12 11c-4 5 2 11 10 8 1-.5 1 .5 0 1-8 5-17-2-13-8 1-1 2-1 3-1z" fill="#0a3f87"/>`), "c")}
        ${B(43, I(22, 22, svg`<rect width="22" height="22" rx="6" fill="#4087fc"/><rect x="4" y="7" width="10" height="8.500" rx="2" fill="#fff"/><path d="M15 10l3.500-2.500v7.500L15 12.500z" fill="#fff"/>`), "c")}
        ${B(8)}${B(40, I(25, 25, svg`<circle cx="11.500" cy="12" r="11" fill="#259b4d"/><path d="M2 6.500A11 11 0 0 1 21.500 7.500H11.500L6.500 14z" fill="#e33b2e"/><path d="M11.500 23A11 11 0 0 0 21.500 7.500H11.500l5 6z" fill="#f9c623"/><circle cx="11.500" cy="12" r="5" fill="#4a86e8" stroke="#fff" stroke-width="1.300"/><circle cx="17" cy="18" r="7.500" fill="#2c6323"/><text x="14.300" y="21.500" font-size="9" font-weight="600" fill="#fff">E</text>`), "c run")}${B(5)}
        ${B(48, I(23, 23, svg`<rect x=".8" y=".8" width="20" height="20" rx="1" fill="#dff0dc" stroke="#2f8b3c" stroke-width="1.500"/><path d="M13 3h7v10h-7z" fill="#9dcf8a"/><path d="M3 3h4.500l3 4.500L13.500 3H17l-5 7 3 4.500H11.500L9.500 12 6 17H2.500l5-7z" fill="#19722a"/><path d="M14 11l8.500 3-3 8.500-7-3z" fill="#f5faf4" stroke="#77ae7b"/><path d="M15 14l5 2M14.500 16l5 2" stroke="#68a06c"/>`), "c run act")}
        ${B(280)}<span class="batt">${T("93%", 27)}</span><i class="nub"></i>
        ${B(26)}${B(23, I(12, 7, svg`<path d="M.5 6.500L6 1l5.500 5.500" fill="none" stroke="#fff" stroke-width="1.300"/>`))}
        ${B(23, I(15, 10, svg`<rect x=".5" y="1.500" width="12" height="7" fill="none" stroke="#fff"/><rect x="2" y="3" width="8" height="4" fill="#fff"/><path d="M14 3.500v3" stroke="#fff" stroke-width="1.500"/>`))}
        ${B(28, I(17, 14, svg`<path d="M.5 5h2.500l3.500-3.500v11L3 9H.5z" fill="none" stroke="#fff"/><path d="M9 5q1.500 2 0 4M11 3.500q3 3.500 0 7M13.500 2q4 5 0 10" fill="none" stroke="#fff"/>`))}
        ${B(34, T("ESP", 18))}
        <div class="clock"><span class="p">${T("10:39 p. m.", 56)}</span>${T("23/09/2020", 58)}</div>
        ${B(36, I(16, 16, svg`<path d="M0 0h16v12h-6l-2.500 3.500V12H0z" fill="#fff"/><path d="M3 3.500h10M3 6.500h10M3 9.500h6" stroke="#222"/>`))}
        <i class="vline" style="height:40px"></i>
      </div>
    </div>`;
  }
}
